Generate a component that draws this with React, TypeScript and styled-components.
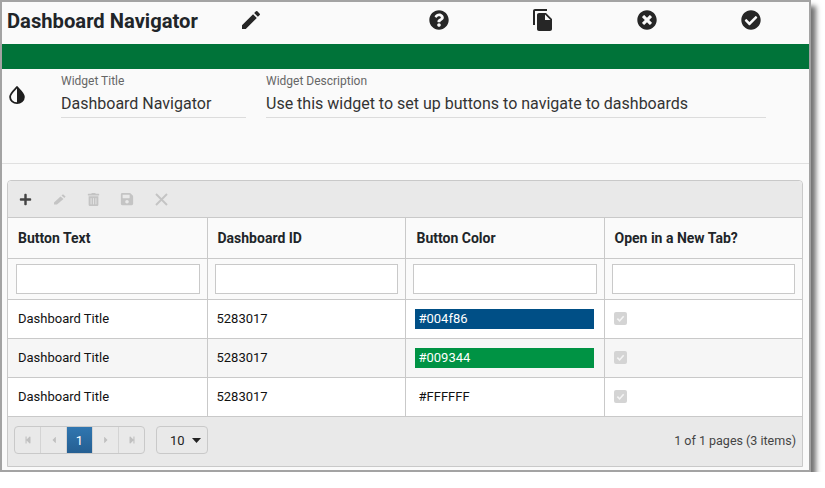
import React from "react";
import styled, { createGlobalStyle } from "styled-components";
import { FaCheckCircle, FaQuestionCircle, FaTimesCircle, FaPlus, FaTrashAlt, FaSave, FaStepBackward, FaStepForward, FaCaretLeft, FaCaretRight } from "react-icons/fa";
import { MdEdit, MdFileCopy } from "react-icons/md";

const Global = createGlobalStyle`
  html, body { margin: 0; padding: 0; background: #fff; }
  body { font-family: Roboto, "Liberation Sans", sans-serif; color: #212529; }
  * { box-sizing: border-box; }
`;

const Frame = styled.div`
  width: 811px;
  height: 472px;
  border: 2px solid #a3a3a3;
  background: #fafafa;
  box-shadow: 5px 6px 5px rgba(0, 0, 0, 0.55);
  display: flex;
  flex-direction: column;
`;

const Header = styled.header`
  flex: none;
  height: 42px;
  display: grid;
  grid-template-columns: 385px repeat(4, 104px);
  align-items: center;
  padding-bottom: 6px;
`;

const TitleBlock = styled.div`
  display: flex;
  align-items: center;
  padding-left: 5px;
`;

const Title = styled.h1`
  margin: 2px 0 0;
  width: 232px;
  font-size: 20.2px;
  font-weight: 700;
  line-height: 24px;
  color: #212529;
`;

const HeaderIcon = styled.span`
  display: flex;
  justify-content: center;
  align-items: center;
  color: #262626;
`;

const GreenBar = styled.div`
  flex: none;
  height: 25px;
  background: #007339;
`;

const Meta = styled.section`
  flex: none;
  height: 95px;
  border-bottom: 1px solid #e0e0e0;
  display: flex;
  align-items: flex-start;
  padding-top: 6px;
`;

const DropWrap = styled.span`
  width: 59px;
  padding: 11px 0 0 7px;
  display: flex;
  color: #1e1e1e;
`;

const Field = styled.div<{ $width: number }>`
  width: ${(p) => p.$width}px;
  margin-right: 20px;
  border-bottom: 1px solid #dcdcdc;
  height: 43px;
`;

const FieldLabel = styled.div`
  font-size: 12px;
  line-height: 13px;
  color: #666;
`;

const FieldValue = styled.div`
  font-size: 16px;
  line-height: 20px;
  margin-top: 6px;
  color: #333;
  white-space: nowrap;
`;

const Body = styled.div`
  flex: 1;
  padding: 16px 6px 4px 5px;
`;

const Grid = styled.div`
  width: 796px;
  border: 1px solid #c9c9c9;
  border-radius: 4px 4px 0 0;
  background: #fff;
`;

const Toolbar = styled.div`
  height: 37px;
  background: #e9e9e9;
  border-bottom: 1px solid #c9c9c9;
  display: flex;
  border-radius: 4px 4px 0 0;
`;

const ToolButton = styled.span<{ $active?: boolean }>`
  width: 34px;
  display: flex;
  align-items: center;
  justify-content: center;
  color: ${(p) => (p.$active ? "#444" : "#c4c4c4")};
`;

const Table = styled.table`
  width: 100%;
  border-collapse: collapse;
  table-layout: fixed;
  font-size: 13px;
`;

const HeadCell = styled.th`
  height: 40px;
  padding: 0 10px;
  text-align: left;
  font-size: 14px;
  font-weight: 700;
  color: #212529;
  background: #fafafa;
  border: 1px solid #c9c9c9;
  border-top: 0;
  &:first-child { border-left: 0; }
  &:nth-child(3) { padding-left: 11px; }
  &:last-child { border-right: 0; }
`;

const FilterCell = styled.td`
  height: 41px;
  padding: 0 7px;
  background: #fafafa;
  border: 1px solid #c9c9c9;
  &:first-child { border-left: 0; padding-left: 8px; }
  &:last-child { border-right: 0; }
`;

const FilterInput = styled.input`
  display: block;
  width: 100%;
  height: 30px;
  border: 1px solid #c9c9c9;
  background: #fff;
`;

const Row = styled.tr<{ $alt?: boolean }>`
  background: ${(p) => (p.$alt ? "#f6f6f6" : "#fff")};
`;

const Cell = styled.td`
  height: 39px;
  padding: 0 9px;
  color: #111;
  border: 1px solid #c9c9c9;
  &:first-child { border-left: 0; padding-left: 10px; }
  &:last-child { border-right: 0; }
`;

const ColorCell = styled(Cell)`
  padding: 0 10px 0 9px;
`;

const Swatch = styled.div<{ $color?: string }>`
  height: 20px;
  line-height: 20px;
  padding-left: 4px;
  background: ${(p) => p.$color ?? "transparent"};
  color: ${(p) => (p.$color ? "#fff" : "#111")};
`;

const Check = styled.span`
  display: flex;
  width: 13px;
  height: 13px;
  border-radius: 2px;
  background: #d4d4d4;
  align-items: center;
  justify-content: center;
`;

const Pager = styled.div`
  height: 49px;
  background: #e9e9e9;
  display: flex;
  align-items: center;
  padding: 0 6px 2px 6px;
  font-size: 12.5px;
`;

const PagerGroup = styled.div`
  display: flex;
  width: 131px;
  height: 28px;
  border: 1px solid #c9c9c9;
  border-radius: 4px;
  overflow: hidden;
`;

const PageButton = styled.span<{ $current?: boolean }>`
  flex: 1;
  display: flex;
  align-items: center;
  justify-content: center;
  color: ${(p) => (p.$current ? "#fff" : "#c0c0c0")};
  background: ${(p) => (p.$current ? "linear-gradient(#3076b0, #255f92)" : "transparent")};
  border-right: 1px solid #d4d4d4;
  font-size: 13px;
  &:last-child { border-right: 0; }
`;

const SizeSelect = styled.div`
  margin-left: 11px;
  width: 52px;
  height: 28px;
  border: 1px solid #c9c9c9;
  border-radius: 4px;
  display: flex;
  align-items: center;
  justify-content: space-between;
  padding: 0 6px 0 13px;
  font-size: 13px;
  color: #222;
`;

const PagerInfo = styled.div`
  margin-left: auto;
  color: #444;
`;

const rows = [
  { color: "#004f86", label: "#004f86" },
  { color: "#009344", label: "#009344" },
  { label: "#FFFFFF" },
];

const CheckMark = () => (
  <svg width="9" height="9" viewBox="0 0 10 10">
    <path d="M1.5 5.2 4 7.7 8.5 2.5" fill="none" stroke="#f4f4f4" strokeWidth="1.8" />
  </svg>
);

const DropIcon = () => (
  <svg width="16" height="18" viewBox="0 0 16 18">
    <path d="M8 1.2C5.5 4 1.1 7.4 1.1 11a6.9 6.1 0 0 0 13.8 0C14.9 7.4 10.5 4 8 1.2Z" fill="none" stroke="currentColor" strokeWidth="1.8" />
    <path d="M8 1.2C10.5 4 14.9 7.4 14.9 11A6.9 6.1 0 0 1 8 17.1Z" fill="currentColor" />
  </svg>
);

const EraserPen = () => (
  <svg width="13" height="12" viewBox="0 0 13 12">
    <path d="M1 9.5 7.5 3.5 10.5 6 4 11.5H1Z" fill="currentColor" />
    <path d="M8.5 2.5 10 1.2 12.6 3.6 11.4 5Z" fill="currentColor" />
  </svg>
);

const CloseCross = () => (
  <svg width="13" height="13" viewBox="0 0 13 13">
    <path d="M1 1 12 12M12 1 1 12" fill="none" stroke="currentColor" strokeWidth="1.9" />
  </svg>
);

const CaretDown = () => (
  <svg width="9" height="5" viewBox="0 0 9 5">
    <path d="M0 0H9L4.5 5Z" fill="currentColor" />
  </svg>
);

export default function App() {
  return (
    <Frame>
      <Global />
      <Header>
        <TitleBlock>
          <Title>Dashboard Navigator</Title>
          <HeaderIcon><MdEdit size={24} /></HeaderIcon>
        </TitleBlock>
        <HeaderIcon><FaQuestionCircle size={20} /></HeaderIcon>
        <HeaderIcon><MdFileCopy size={24} /></HeaderIcon>
        <HeaderIcon><FaTimesCircle size={20} /></HeaderIcon>
        <HeaderIcon><FaCheckCircle size={20} /></HeaderIcon>
      </Header>
      <GreenBar />
      <Meta>
        <DropWrap><DropIcon /></DropWrap>
        <Field $width={185}>
          <FieldLabel>Widget Title</FieldLabel>
          <FieldValue>Dashboard Navigator</FieldValue>
        </Field>
        <Field $width={500}>
          <FieldLabel>Widget Description</FieldLabel>
          <FieldValue>Use this widget to set up buttons to navigate to dashboards</FieldValue>
        </Field>
      </Meta>
      <Body>
        <Grid>
          <Toolbar>
            <ToolButton $active><FaPlus size={13} /></ToolButton>
            <ToolButton><EraserPen /></ToolButton>
            <ToolButton><FaTrashAlt size={13} /></ToolButton>
            <ToolButton><FaSave size={14} /></ToolButton>
            <ToolButton><CloseCross /></ToolButton>
          </Toolbar>
          <Table>
            <colgroup>
              <col width="199" />
              <col width="198" />
              <col width="199" />
              <col width="198" />
            </colgroup>
            <thead>
              <tr>
                <HeadCell>Button Text</HeadCell>
                <HeadCell>Dashboard ID</HeadCell>
                <HeadCell>Button Color</HeadCell>
                <HeadCell>Open in a New Tab?</HeadCell>
              </tr>
              <tr>
                <FilterCell><FilterInput /></FilterCell>
                <FilterCell><FilterInput /></FilterCell>
                <FilterCell><FilterInput /></FilterCell>
                <FilterCell><FilterInput /></FilterCell>
              </tr>
            </thead>
            <tbody>
              {rows.map((r, i) => (
                <Row key={r.label} $alt={i === 1}>
                  <Cell>Dashboard Title</Cell>
                  <Cell>5283017</Cell>
                  <ColorCell><Swatch $color={r.color}>{r.label}</Swatch></ColorCell>
                  <Cell><Check><CheckMark /></Check></Cell>
                </Row>
              ))}
            </tbody>
          </Table>
          <Pager>
            <PagerGroup>
              <PageButton><FaStepBackward size={8} /></PageButton>
              <PageButton><FaCaretLeft size={10} /></PageButton>
              <PageButton $current>1</PageButton>
              <PageButton><FaCaretRight size={10} /></PageButton>
              <PageButton><FaStepForward size={8} /></PageButton>
            </PagerGroup>
            <SizeSelect>10 <CaretDown /></SizeSelect>
            <PagerInfo>1 of 1 pages (3 items)</PagerInfo>
          </Pager>
        </Grid>
      </Body>
    </Frame>
  );
}
